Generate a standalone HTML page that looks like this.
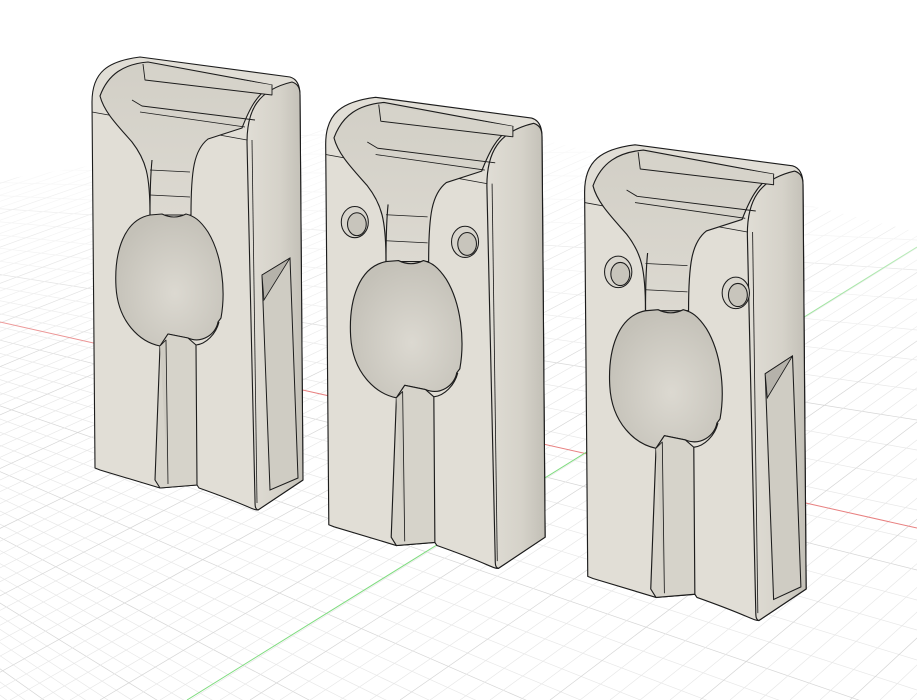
<!DOCTYPE html>
<html><head><meta charset="utf-8"><style>
html,body{margin:0;padding:0;background:#fff;width:917px;height:700px;overflow:hidden;position:relative}
svg{display:block;position:absolute;left:0;top:0}
</style></head><body>
<svg id="s" width="917" height="700" viewBox="0 0 917 700" xmlns="http://www.w3.org/2000/svg">
<defs>
<clipPath id="gc"><polygon points="0,180 430,112 917,232 917,700 0,700"/></clipPath>
<linearGradient id="fade" x1="0" y1="0" x2="0" y2="1">
<stop offset="0" stop-color="#fff" stop-opacity="1"/><stop offset="0.25" stop-color="#fff" stop-opacity="0.7"/><stop offset="0.55" stop-color="#fff" stop-opacity="0"/>
</linearGradient>
<linearGradient id="side" x1="0" y1="0" x2="1" y2="0">
<stop offset="0" stop-color="#e0ddd5"/><stop offset="0.6" stop-color="#d5d2c9"/><stop offset="1" stop-color="#c2bfb6"/>
</linearGradient>
<radialGradient id="bowl" cx="0.55" cy="0.6" r="0.6">
<stop offset="0" stop-color="#dcd9d1"/><stop offset="1" stop-color="#c4c1b8"/>
</radialGradient>
<linearGradient id="cav" x1="0" y1="0" x2="0" y2="1">
<stop offset="0" stop-color="#d2cfc6"/><stop offset="1" stop-color="#dcd9d1"/>
</linearGradient>
<g id="base" stroke="#1c1c1c" stroke-width="1.1" stroke-linejoin="round">
 <path d="M95,468 L92,102 C92,72 108,61 140,57 L290,77 C297,79 300,85 300,95 L303,480 L258,510 C252,510 250,506 199,488 L197,485 L160,488 L100,470 Z" fill="#e1ded6"/>
 <path d="M247,142 C247,110 258,90 292,82 C298,84 300,88 300,95 L303,480 L258,510 C255,509 255,506 255,500 Z" fill="url(#side)"/>
 <path d="M252,140 L257,503" fill="none" stroke-width="0.8"/>
 <path d="M92,112 L247,140" fill="none" stroke-width="0.8"/>
 <path d="M100,96 C108,74 124,64 148,62 L272,85 C256,95 249,110 242,128 L208,139 C194,150 191,170 191,215 L150,215 C150,175 146,160 132,142 C118,126 104,112 100,96 Z" fill="url(#cav)"/>
 <path d="M143,64 L145,80 L272,95 L272,85" fill="#d6d3ca" stroke-width="0.9"/>
 <path d="M132,100 L142,106 L255,120" fill="none" stroke-width="0.9"/>
 <path d="M140,112 L245,127" fill="none" stroke-width="0.8"/>
 <path d="M150,170 L190,172 M150,195 L190,197" fill="none" stroke-width="0.7"/>
 <path d="M152,160 C150,180 150,200 150,215" fill="none"/>
 <path d="M150,215 C124,220 114,252 116,287 C118,322 140,342 160,346 L168,334 L188,338 C202,344 216,334 218,322 L221,318 C226,290 222,255 208,232 C200,220 194,216 186,214 C178,218 170,218 162,214 Z" fill="url(#bowl)"/>
 <path d="M160,346 L155,480 L160,488 L197,485 L196,345 L188,338 L168,334 Z" fill="#d6d3ca"/>
 <path d="M160,346 L166,340 L168,484" fill="#cfccc3" stroke-width="0.8"/>
 <path d="M196,345 C206,344 216,334 219,322" fill="none"/>
</g>
</defs>
<g id="grid" clip-path="url(#gc)" stroke-width="0.7" fill="none"></g>
<line x1="0" y1="322" x2="917" y2="528" stroke="#e88080" stroke-width="1" clip-path="url(#gc)"/>
<line x1="187" y1="700" x2="917" y2="247" stroke="#7fdc7f" stroke-width="1" clip-path="url(#gc)"/>
<rect x="0" y="0" width="917" height="700" fill="url(#fade)"/>

<g>
 <use href="#base"/>
 <path d="M262,275 L290,258 L298,478 L270,490 Z" fill="#cfccc3" stroke="#1c1c1c" stroke-width="1"/>
 <path d="M262,275 L290,258 L264,300 Z" fill="#b5b2aa" stroke="#1c1c1c" stroke-width="0.8"/>
</g>
<g transform="translate(230,38) scale(1.04)">
 <use href="#base"/>
 <g stroke="#1c1c1c" stroke-width="1">
  <ellipse cx="120" cy="177" rx="13" ry="15" fill="#d8d5cd"/>
  <ellipse cx="122" cy="179" rx="9" ry="11" fill="#c8c5bc"/>
  <ellipse cx="226" cy="196" rx="13" ry="15" fill="#d8d5cd"/>
  <ellipse cx="228" cy="198" rx="9" ry="11" fill="#c8c5bc"/>
 </g>
</g>
<g transform="translate(488,85) scale(1.05)">
 <use href="#base"/>
 <g stroke="#1c1c1c" stroke-width="1">
  <ellipse cx="124" cy="178" rx="13" ry="15" fill="#d8d5cd"/>
  <ellipse cx="126" cy="180" rx="9" ry="11" fill="#c8c5bc"/>
  <ellipse cx="236" cy="198" rx="13" ry="15" fill="#d8d5cd"/>
  <ellipse cx="238" cy="200" rx="9" ry="11" fill="#c8c5bc"/>
  <path d="M264,275 L290,258 L298,478 L272,490 Z" fill="#cfccc3"/>
  <path d="M264,275 L290,258 L266,298 Z" fill="#b5b2aa" stroke-width="0.8"/>
 </g>
</g>
</svg>
<script>
(function(){
 var g=document.getElementById('grid'),h='';
 var v1=[-715,161],v2=[2200,-550];
 var k=0;
 for(var y=120;y<=2400;y+=30,k++){
  h+='<line x1="'+v1[0]+'" y1="'+v1[1]+'" x2="917" y2="'+y+'" stroke="'+(k%5==0?'#d6d6d6':'#e8e8e8')+'"/>';
 }
 k=0;
 for(var x=-2600;x<=1200;x+=30,k++){
  h+='<line x1="'+v2[0]+'" y1="'+v2[1]+'" x2="'+x+'" y2="700" stroke="'+(k%5==0?'#d6d6d6':'#e8e8e8')+'"/>';
 }
 g.innerHTML=h;
})();
</script>
</body></html>
